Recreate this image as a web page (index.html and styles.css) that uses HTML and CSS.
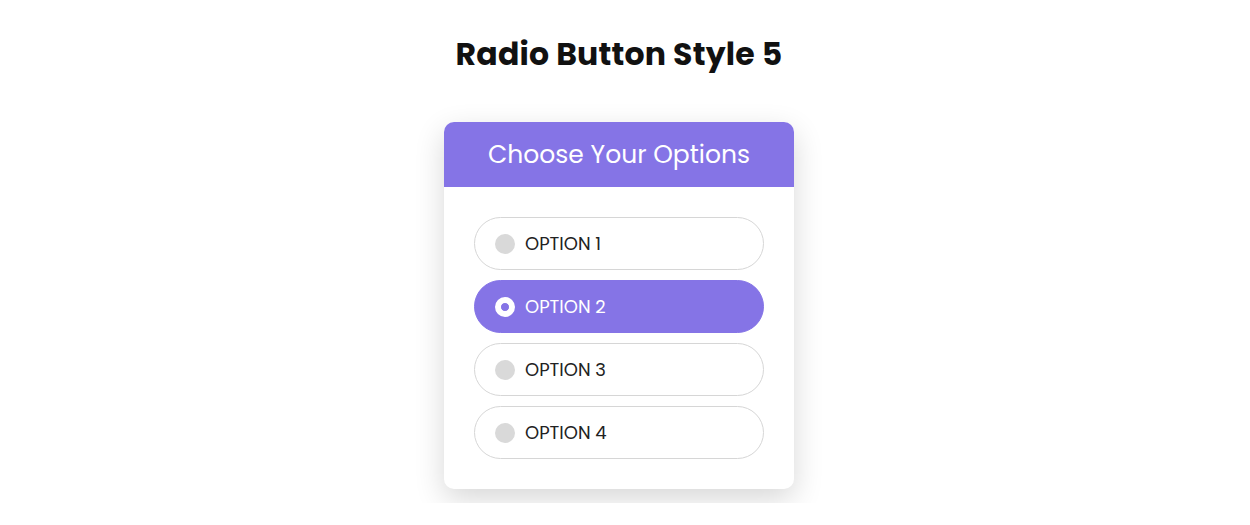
FILE: index.html
```html
<!DOCTYPE html>
<html lang="en">
<head>
<meta charset="utf-8">
<title>Radio Button Style 5</title>
<link rel="stylesheet" href="styles.css">
</head>
<body>
<main class="page">
  <h1 class="title">Radio Button Style 5</h1>
  <section class="card">
    <header class="card-head">Choose Your Options</header>
    <div class="card-body">
      <label class="option"><input type="radio" name="opt"><span class="dot"></span><span class="label">OPTION 1</span></label>
      <label class="option"><input type="radio" name="opt" checked><span class="dot"></span><span class="label">OPTION 2</span></label>
      <label class="option"><input type="radio" name="opt"><span class="dot"></span><span class="label">OPTION 3</span></label>
      <label class="option"><input type="radio" name="opt"><span class="dot"></span><span class="label">OPTION 4</span></label>
    </div>
  </section>
</main>
</body>
</html>
```
FILE: styles.css
```css
* { box-sizing: border-box; }
html, body { margin: 0; padding: 0; background: #fff; }
body { font-family: "Poppins", "Open Sans", "Noto Sans", sans-serif; }

.page {
  width: 1238px;
  display: flex;
  flex-direction: column;
  align-items: center;
  padding: 34px 0 14px;
  overflow: hidden;
}

.title {
  margin: 0 0 48px;
  font-size: 31.5px;
  line-height: 40px;
  font-weight: 700;
  color: #111;
  letter-spacing: 0.2px;
}

.card {
  width: 350px;
  background: #fff;
  border-radius: 10px;
  overflow: hidden;
  box-shadow: 0 10px 30px rgba(0, 0, 0, 0.16);
}

.card-head {
  height: 65px;
  display: flex;
  align-items: center;
  justify-content: center;
  background: #8574e6;
  color: #fff;
  font-size: 25px;
  font-weight: 400;
}

.card-body {
  padding: 30px;
  display: flex;
  flex-direction: column;
  gap: 10px;
}

.option {
  height: 53px;
  display: flex;
  align-items: center;
  gap: 10px;
  padding: 0 20px;
  border: 1px solid #d6d6d6;
  border-radius: 27px;
  cursor: pointer;
  color: #222;
  font-size: 18px;
}

.option input { display: none; }

.dot {
  width: 20px;
  height: 20px;
  border-radius: 50%;
  background: #d9d9d9;
  flex: none;
}

.option:has(input:checked) {
  background: #8574e6;
  border-color: #8574e6;
  color: #fff;
}

.option:has(input:checked) .dot {
  background: #fff;
  border: 6px solid #fff;
  background-image: radial-gradient(circle, #8574e6 0 4px, #fff 4.5px);
}
```
